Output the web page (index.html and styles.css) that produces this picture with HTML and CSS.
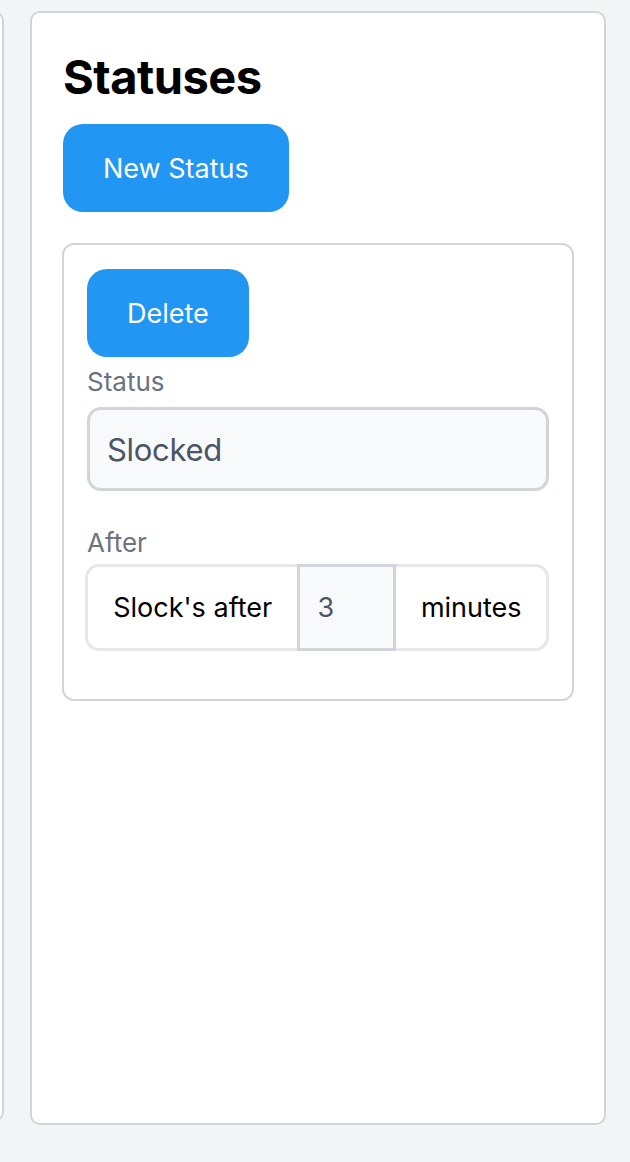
FILE: index.html
```html
<!DOCTYPE html>
<html lang="en">
<head>
<meta charset="utf-8">
<title>Statuses</title>
<link rel="stylesheet" href="styles.css">
</head>
<body>
<div class="board">
  <section class="panel panel-prev"></section>
  <section class="panel panel-main">
    <h1 class="title">Statuses</h1>
    <button class="btn btn-new" type="button">New Status</button>
    <div class="status-card">
      <button class="btn btn-delete" type="button">Delete</button>
      <label class="field-label label-status" for="status-name">Status</label>
      <input class="text-input" id="status-name" type="text" value="Slocked">
      <div class="field-label label-after">After</div>
      <div class="input-group">
        <span class="addon addon-start">Slock's after</span>
        <input class="num-input" type="text" value="3">
        <span class="addon addon-end">minutes</span>
      </div>
    </div>
  </section>
</div>
</body>
</html>
```
FILE: styles.css
```css
html, body {
  margin: 0;
  padding: 0;
}
body {
  background: #f3f4f6;
  font-family: Inter, "Noto Sans", "Liberation Sans", sans-serif;
  color: #000;
  overflow: hidden;
}
.board {
  display: flex;
  align-items: flex-start;
  gap: 26px;
  padding-top: 11px;
}
.panel {
  box-sizing: border-box;
  background: #fff;
  border: 2px solid #d1d5db;
  border-radius: 10px;
  flex: none;
}
.panel-prev {
  width: 300px;
  height: 1111px;
  margin-left: -296px;
}
.panel-main {
  width: 576px;
  height: 1114px;
  padding: 35px 30px 0 31px;
}
.title {
  margin: 0;
  font-size: 47px;
  line-height: 58px;
  font-weight: 700;
  letter-spacing: -0.5px;
}
.btn {
  display: flex;
  align-items: center;
  justify-content: center;
  height: 88px;
  padding: 0 40px;
  border: 0;
  border-radius: 20px;
  background: #2196f3;
  color: #fff;
  font-family: inherit;
  font-size: 27px;
  font-weight: 400;
}
.btn-new {
  margin-top: 18px;
}
.status-card {
  box-sizing: border-box;
  margin-top: 31px;
  margin-left: -1px;
  width: 512px;
  border: 2px solid #d1d5db;
  border-radius: 12px;
  padding: 24px 23px 48px 23px;
}
.field-label {
  display: block;
  font-size: 26px;
  line-height: 30px;
  color: #6b7280;
}
.label-status {
  margin: 10px 0 10px 0;
}
.label-after {
  margin: 37px 0 6px 0;
}
.text-input {
  display: block;
  box-sizing: border-box;
  width: 462px;
  height: 84px;
  padding: 0 17px;
  border: 3px solid #d1d5db;
  border-radius: 14px;
  background: #f8f9fa;
  color: #4b5563;
  font-family: inherit;
  font-size: 31px;
  letter-spacing: -0.3px;
  outline: none;
}
.input-group {
  display: flex;
  height: 87px;
  margin-left: -2px;
}
.addon {
  box-sizing: border-box;
  display: flex;
  align-items: center;
  justify-content: center;
  border: 3px solid #e5e7eb;
  background: #fff;
  font-size: 27px;
  color: #000;
}
.addon-start {
  width: 213px;
  border-right: 0;
  border-radius: 14px 0 0 14px;
}
.addon-end {
  width: 153px;
  border-left: 0;
  border-radius: 0 14px 14px 0;
}
.num-input {
  box-sizing: border-box;
  width: 99px;
  height: 87px;
  margin: 0;
  padding: 0 17px;
  border: 3px solid #d1d5db;
  background: #f8f9fa;
  color: #4b5563;
  font-family: inherit;
  font-size: 27px;
  outline: none;
}
```
